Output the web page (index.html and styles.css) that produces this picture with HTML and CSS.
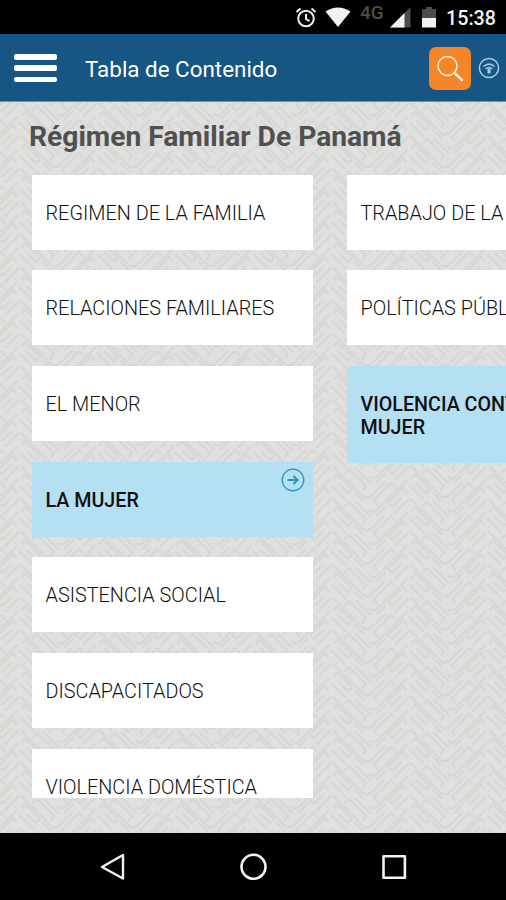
FILE: index.html
```
<!DOCTYPE html>
<html lang="es">
<head>
<meta charset="UTF-8">
<meta name="viewport" content="width=device-width, initial-scale=1.0">
<title>Tabla de Contenido</title>
<link rel="stylesheet" href="styles.css">
</head>
<body>

<div class="status-bar">
  <svg class="alarm" width="22" height="22" viewBox="0 0 22 22" fill="none" stroke="#eee" stroke-width="2">
    <circle cx="11" cy="11.500" r="7.800"/>
    <path d="M11 7v5l3.500 2.200M1.500 5l4-3.600M20.500 5l-4-3.600"/>
  </svg>
  <svg class="wifi" width="26" height="20" viewBox="0 0 26 20">
    <path d="M13 20L.5 4.500Q13-3.500 25.500 4.500z" fill="#f2f2f2"/>
  </svg>
  <span class="network">4G</span>
  <svg class="signal" width="22" height="21" viewBox="0 0 22 21">
    <path d="M21.500 0v20.500H1z" fill="#4c4c4c"/>
    <path d="M15.500 6v14.500H1z" fill="#f2f2f2"/>
  </svg>
  <svg class="battery" width="14" height="21" viewBox="0 0 14 21">
    <path d="M4 0h6v2h4v9H0V2h4z" fill="#4c4c4c"/>
    <path d="M0 11h14v9.500H0z" fill="#f2f2f2"/>
  </svg>
  <span class="clock">15:38</span>
</div>

<div class="header">
  <div class="menu">
    <span></span>
    <span></span>
    <span></span>
  </div>
  <div class="title">Tabla de Contenido</div>
  <div class="search">
    <svg width="42" height="43" viewBox="0 0 42 43" fill="none" stroke="#fff3e6">
      <circle cx="18.500" cy="19" r="9.500" stroke-width="1.500"/>
      <path d="M25.500 26l7.500 7" stroke-width="2.400" stroke-linecap="round"/>
    </svg>
  </div>
  <svg class="cast" width="22" height="22" viewBox="0 0 22 22" fill="none" stroke="#a9cbe6" stroke-width="1.500">
    <circle cx="11" cy="11" r="9.600"/>
    <path d="M5.500 9.500Q11 4.800 16.500 9.500M7.500 12Q11 9 14.500 12"/>
    <path d="M11 11.500v5" stroke-width="3"/>
  </svg>
</div>

<div class="content">
  <svg class="texture" width="506" height="732">
    <defs>
      <g id="fret" fill="none" stroke="#d7d7d5" stroke-width="2.400" stroke-linecap="round" stroke-linejoin="round">
        <path d="M2-1l30 30q4 3 7 0M3 11l3-4 15 15-4 4-9-9M14 6l4-4 17 17-3 4M1 19l13 13M25 2l14 14M24 26l8 8"/>
      </g>
      <g id="strip">
        <use href="#fret" y="-33"/>
        <use href="#fret"/>
        <use href="#fret" y="33"/>
      </g>
      <pattern id="weave" width="78" height="33" patternUnits="userSpaceOnUse" x="19" y="2">
        <use href="#strip"/>
        <use href="#strip" transform="translate(78 14) scale(-1 1)"/>
      </pattern>
    </defs>
    <rect width="506" height="732" fill="url(#weave)"/>
  </svg>

  <h1>Régimen Familiar De Panamá</h1>

  <div class="columns">
    <div class="column">
      <div class="card">REGIMEN DE LA FAMILIA</div>
      <div class="card">RELACIONES FAMILIARES</div>
      <div class="card">EL MENOR</div>
      <div class="card selected">LA MUJER
        <svg class="arrow" width="24" height="24" viewBox="0 0 24 24" fill="none" stroke="#2f93bd">
          <circle cx="12" cy="12" r="10.800" stroke-width="1.300"/>
          <path d="M6.500 12h10M12.500 8l4 4-4 4" stroke-width="2.100"/>
        </svg>
      </div>
      <div class="card">ASISTENCIA SOCIAL</div>
      <div class="card">DISCAPACITADOS</div>
      <div class="card">VIOLENCIA DOMÉSTICA</div>
    </div>
    <div class="column">
      <div class="card">TRABAJO DE LA MUJER</div>
      <div class="card">POLÍTICAS PÚBLICAS</div>
      <div class="card selected">VIOLENCIA CONTRA LA MUJER</div>
    </div>
  </div>
</div>

<div class="nav-bar">
  <svg width="28" height="30" viewBox="0 0 28 30" fill="none" stroke="#f2f2f2" stroke-width="2.400" stroke-linejoin="round">
    <path d="M24 3v23.500L3 15z"/>
  </svg>
  <svg width="28" height="30" viewBox="0 0 28 30" fill="none" stroke="#f2f2f2" stroke-width="2.600">
    <circle cx="13.500" cy="14.800" r="12"/>
  </svg>
  <svg width="28" height="30" viewBox="0 0 28 30" fill="none" stroke="#f2f2f2" stroke-width="2.600" stroke-linejoin="round">
    <rect x="3.500" y="4.300" width="21.400" height="21.400"/>
  </svg>
</div>

</body>
</html>
```

FILE: styles.css
```
body {
  margin: 0;
  width: 506px;
  height: 900px;
  overflow: hidden;
  display: flex;
  flex-direction: column;
  font-family: Roboto, "Liberation Sans", sans-serif;
  background-color: #000;
}

.status-bar {
  flex: none;
  height: 34px;
  box-sizing: border-box;
  padding: 7px 11px 0 0;
  display: flex;
  justify-content: flex-end;
  align-items: flex-start;
  color: #f2f2f2;
}

.wifi {
  margin-left: 8px;
}

.network {
  margin: -4px 0 0 9px;
  width: 25px;
  font-size: 19px;
  line-height: 20px;
  font-weight: 500;
  color: #4c4c4c;
}

.signal {
  margin-left: 4px;
}

.battery {
  margin-left: 11px;
}

.clock {
  margin-left: 10px;
  width: 49px;
  font-size: 19.700px;
  line-height: 23px;
  font-weight: 500;
  white-space: nowrap;
}

.header {
  flex: none;
  height: 68px;
  box-sizing: border-box;
  padding: 0 6px 0 14px;
  display: flex;
  align-items: center;
  background-color: #165584;
  border-bottom: 1px solid #7e909c;
}

.menu {
  width: 43px;
  height: 28px;
  margin-top: 1px;
  display: flex;
  flex-direction: column;
  justify-content: space-between;
}

.menu span {
  height: 5.500px;
  border-radius: 2px;
  background-color: #fff;
}

.title {
  flex: 1;
  margin: 2px 0 0 28px;
  font-size: 22.400px;
  color: #fff;
}

.search {
  width: 42px;
  height: 43px;
  margin-top: 1px;
  border-radius: 7px;
  background-color: #f58529;
}

.search svg {
  display: block;
}

.cast {
  margin: 1px 0 0 7px;
}

.content {
  flex: none;
  position: relative;
  height: 731px;
  box-sizing: border-box;
  padding: 18px 0 0 29px;
  overflow: hidden;
  background-color: #e0e0de;
}

.texture {
  position: absolute;
  top: 0;
  left: 0;
}

h1 {
  position: relative;
  margin: 0;
  font-size: 28.200px;
  line-height: 34px;
  font-weight: 700;
  color: #505050;
  white-space: nowrap;
}

.columns {
  position: relative;
  display: flex;
  gap: 33.5px;
  height: 623px;
  margin: 20.800px 0 0 2.500px;
  overflow: hidden;
}

.column {
  flex: none;
  width: 281.500px;
  display: flex;
  flex-direction: column;
  gap: 20.660px;
}

.card {
  flex: none;
  position: relative;
  min-height: 75px;
  box-sizing: border-box;
  padding: 27px 14px 24px;
  font-size: 19.850px;
  line-height: 23px;
  font-weight: 300;
  color: #111;
  background-color: #fff;
}

.selected {
  font-size: 19.700px;
  font-weight: 500;
  background-color: #b5dff3;
}

.arrow {
  position: absolute;
  top: 6px;
  right: 8px;
}

.nav-bar {
  flex: none;
  height: 67px;
  box-sizing: border-box;
  padding: 0 98px 0 99px;
  display: flex;
  justify-content: space-between;
  align-items: center;
}
```
